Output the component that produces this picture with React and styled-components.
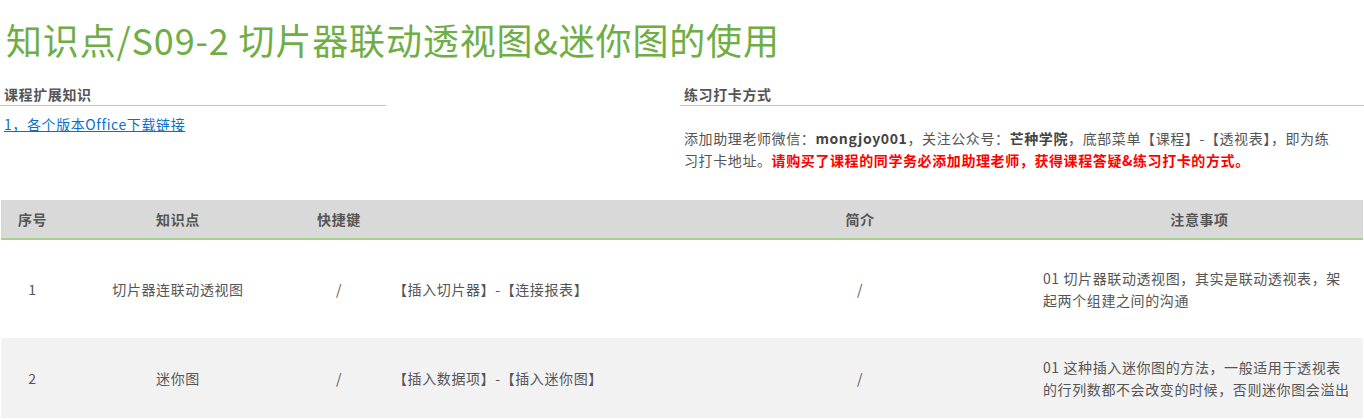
import React from "react";
import styled, { createGlobalStyle } from "styled-components";

const GlobalStyle = createGlobalStyle`
  body {
    margin: 0;
    background: #fff;
    font-family: "Noto Sans CJK SC", "Noto Sans", "Liberation Sans", sans-serif;
    color: #555;
  }
`;

const Page = styled.div`
  width: 1364px;
`;

const Title = styled.h1`
  margin: 0;
  padding: 16px 0 0 6px;
  height: 62px;
  box-sizing: border-box;
  font-size: 36px;
  font-weight: 400;
  line-height: 46px;
  color: #6fae45;
  letter-spacing: 0.85px;
`;

const InfoRow = styled.div`
  display: grid;
  grid-template-columns: 386px 1fr;
  column-gap: 294px;
  margin-top: 22px;
  height: 116px;
  font-size: 14px;
  letter-spacing: 0.6px;
`;

const Section = styled.div`
  display: flex;
  flex-direction: column;
`;

const SectionHead = styled.div`
  font-weight: 700;
  line-height: 20px;
  padding: 0 0 1px 4px;
  border-bottom: 1px solid #b2d49a;
  color: #555;
`;

const Link = styled.a`
  display: block;
  margin: 7px 0 0 4px;
  line-height: 22px;
  color: #0b6fc9;
  text-decoration: underline;
`;

const Para = styled.p`
  margin: 21px 24px 0 4px;
  line-height: 22px;
  color: #555;
`;

const Strong = styled.b`
  color: #444;
`;

const Red = styled.b`
  color: #f00;
`;

const Table = styled.div`
  margin-left: 1px;
  width: 1362px;
`;

const Row = styled.div`
  display: grid;
  grid-template-columns: 63px 228px 94px 298px 352px 327px;
  align-items: center;
  height: ${(p) => p.$h}px;
  background: ${(p) => p.$bg};
  border-bottom: ${(p) => (p.$head ? "2px solid #a8d08d" : "none")};
  font-size: 14px;
  letter-spacing: 0.6px;
  font-weight: ${(p) => (p.$head ? 700 : 400)};
  color: #555;
`;

const Cell = styled.div`
  padding: 0 ${(p) => (p.$left ? "10px" : "7px")} 0 7px;
  text-align: ${(p) => (p.$left ? "left" : "center")};
  line-height: 22px;
`;

const rows = [
  {
    no: "1",
    name: "切片器连联动透视图",
    key: "/",
    path: "【插入切片器】-【连接报表】",
    intro: "/",
    note: "01 切片器联动透视图，其实是联动透视表，架起两个组建之间的沟通",
    h: 98,
    bg: "#fff",
  },
  {
    no: "2",
    name: "迷你图",
    key: "/",
    path: "【插入数据项】-【插入迷你图】",
    intro: "/",
    note: "01 这种插入迷你图的方法，一般适用于透视表的行列数都不会改变的时候，否则迷你图会溢出",
    h: 80,
    bg: "#f2f2f2",
  },
];

export default function App() {
  return (
    <Page>
      <GlobalStyle />
      <Title>知识点/S09-2 切片器联动透视图&amp;迷你图的使用</Title>
      <InfoRow>
        <Section>
          <SectionHead>课程扩展知识</SectionHead>
          <Link href="#">1，各个版本Office下载链接</Link>
        </Section>
        <Section>
          <SectionHead>练习打卡方式</SectionHead>
          <Para>
            添加助理老师微信：<Strong>mongjoy001</Strong>，关注公众号：
            <Strong>芒种学院</Strong>，底部菜单【课程】-【透视表】，即为练习打卡地址。
            <Red>请购买了课程的同学务必添加助理老师，获得课程答疑&amp;练习打卡的方式。</Red>
          </Para>
        </Section>
      </InfoRow>
      <Table>
        <Row $head $h={38} $bg="#d9d9d9">
          <Cell>序号</Cell>
          <Cell>知识点</Cell>
          <Cell>快捷键</Cell>
          <Cell />
          <Cell>简介</Cell>
          <Cell>注意事项</Cell>
        </Row>
        {rows.map((r) => (
          <Row key={r.no} $h={r.h} $bg={r.bg}>
            <Cell>{r.no}</Cell>
            <Cell>{r.name}</Cell>
            <Cell>{r.key}</Cell>
            <Cell $left>{r.path}</Cell>
            <Cell>{r.intro}</Cell>
            <Cell $left>{r.note}</Cell>
          </Row>
        ))}
      </Table>
    </Page>
  );
}
